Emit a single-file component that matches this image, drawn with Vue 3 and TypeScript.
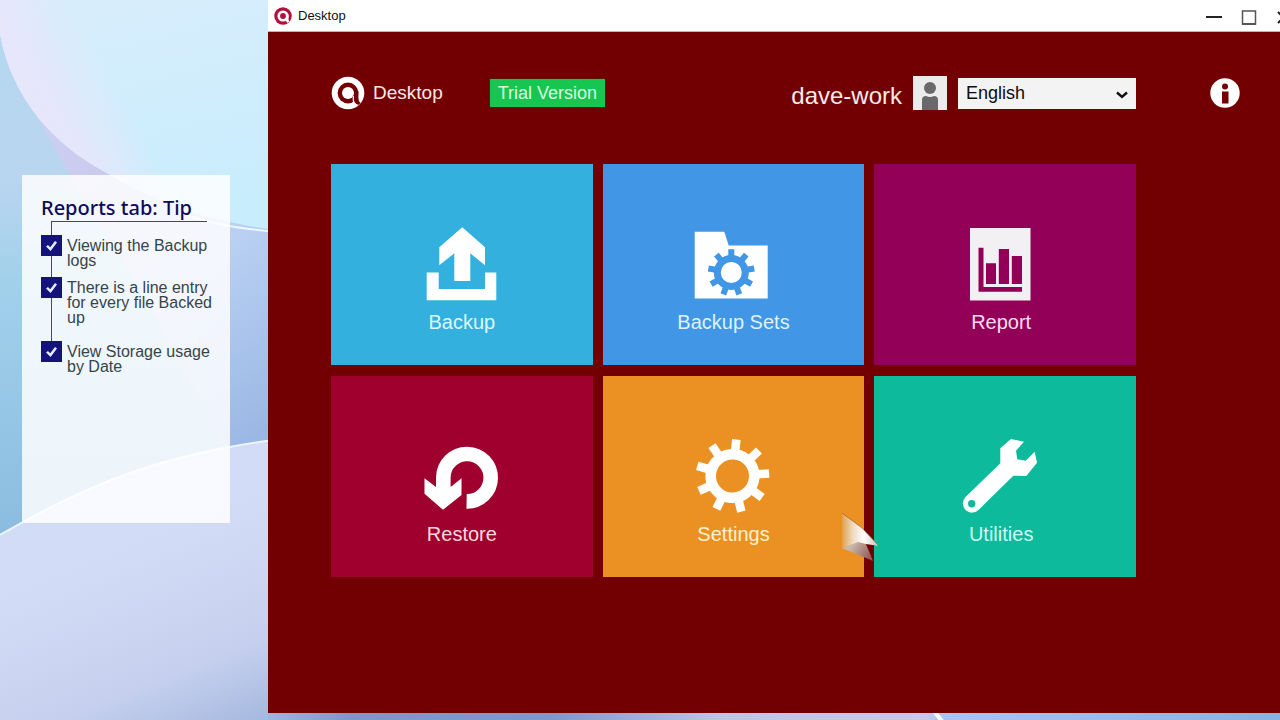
<script setup lang="ts">
import { ref } from 'vue'

interface Tip {
  id: string
  text: string
  done: boolean
}

interface Tile {
  id: string
  label: string
}

const tips = ref<Tip[]>([
  { id: 'tip-logs', text: 'Viewing the Backup logs', done: true },
  { id: 'tip-lines', text: 'There is a line entry for every file Backed up', done: true },
  { id: 'tip-storage', text: 'View Storage usage by Date', done: true },
])

const tiles: Tile[] = [
  { id: 'backup', label: 'Backup' },
  { id: 'sets', label: 'Backup Sets' },
  { id: 'report', label: 'Report' },
  { id: 'restore', label: 'Restore' },
  { id: 'settings', label: 'Settings' },
  { id: 'utilities', label: 'Utilities' },
]

const teeth = [0, 1, 2, 3, 4, 5, 6, 7, 8].map((n) => n * 40)
const language = ref('English')
</script>

<template>
  <div class="screen">
    <svg class="wallpaper" viewBox="0 0 1280 720" preserveAspectRatio="xMinYMin slice" aria-hidden="true">
      <defs>
        <linearGradient id="base" x1="0" y1="0" x2="0" y2="1">
          <stop offset="0" stop-color="#b4d8f0" />
          <stop offset="0.25" stop-color="#b9d5f0" />
          <stop offset="0.4" stop-color="#a0d0ea" />
          <stop offset="0.75" stop-color="#8bbce0" />
        </linearGradient>
        <linearGradient id="sky" x1="0" y1="0" x2="0.3" y2="1">
          <stop offset="0" stop-color="#d9edfc" />
          <stop offset="1" stop-color="#c8edfd" />
        </linearGradient>
        <linearGradient id="edge" x1="10" y1="100" x2="95" y2="50" gradientUnits="userSpaceOnUse">
          <stop offset="0" stop-color="#e8e6fb" />
          <stop offset="0.35" stop-color="#e8e6fb" stop-opacity="0.9" />
          <stop offset="1" stop-color="#e8e6fb" stop-opacity="0" />
        </linearGradient>
        <linearGradient id="ribbon" x1="20" y1="90" x2="290" y2="450" gradientUnits="userSpaceOnUse">
          <stop offset="0" stop-color="#cfd3f3" />
          <stop offset="0.3" stop-color="#c9c9ee" />
          <stop offset="0.55" stop-color="#b9d0f2" />
          <stop offset="1" stop-color="#95b3e2" />
        </linearGradient>
        <linearGradient id="hill" x1="60" y1="440" x2="190" y2="760" gradientUnits="userSpaceOnUse">
          <stop offset="0" stop-color="#d0dcf6" />
          <stop offset="0.4" stop-color="#d2dbf5" />
          <stop offset="0.75" stop-color="#c6d0ee" />
          <stop offset="1" stop-color="#a2b6de" />
        </linearGradient>
        <linearGradient id="strip" x1="268" y1="0" x2="1280" y2="0" gradientUnits="userSpaceOnUse">
          <stop offset="0" stop-color="#9bb8de" />
          <stop offset="0.08" stop-color="#7d98c6" />
          <stop offset="0.28" stop-color="#8495c9" />
          <stop offset="0.45" stop-color="#c2c4e4" />
          <stop offset="0.65" stop-color="#ccc6ea" />
          <stop offset="0.67" stop-color="#a3c6f2" />
          <stop offset="1" stop-color="#82b6dc" />
        </linearGradient>
      </defs>
      <rect width="1280" height="720" fill="url(#base)" />
      <path d="M20 90C50 135 70 180 110 240C160 320 200 400 230 450L300 440V200L110 100Z" fill="url(#ribbon)" />
      <path d="M0 0V34C12 100 55 145 105 172C150 198 200 223 300 233V0Z" fill="url(#sky)" />
      <path d="M0 0V34C12 100 55 145 105 172C150 198 200 223 300 233V0Z" fill="url(#edge)" />
      <path d="M180 212C205 223 235 229 300 234" fill="none" stroke="#e9f7ff" stroke-width="2" />
      <path d="M0 535C70 495 150 452 300 437V720H0Z" fill="url(#hill)" />
      <path d="M0 535C70 495 150 452 300 437" fill="none" stroke="#eaf5ff" stroke-width="2" />
      <rect x="268" y="712" width="1012" height="8" fill="url(#strip)" />
      <path d="M933 710L942 721" stroke="#ffffff" stroke-width="4" />
    </svg>

    <aside class="side">
      <section class="card">
        <h2>Reports tab: Tip</h2>
        <ul>
          <li v-for="tip in tips" :key="tip.id">
            <input :id="tip.id" v-model="tip.done" type="checkbox" />
            <label :for="tip.id">{{ tip.text }}</label>
          </li>
        </ul>
      </section>
    </aside>

    <main class="window">
      <div class="titlebar">
        <svg class="app-mark" viewBox="0 0 34 34" aria-hidden="true">
          <circle cx="17" cy="17" r="16.500" fill="#b0103c" />
          <circle cx="17" cy="17" r="10.500" fill="#fff" />
          <path d="M22 14H27.500V23Q27.500 26 29.500 27.500L26 30Q22 28 22 24Z" fill="#fff" />
          <circle cx="17" cy="17" r="5.500" fill="#b0103c" />
        </svg>
        <span class="app-title">Desktop</span>
        <button type="button" class="win-btn" aria-label="Minimize">
          <svg viewBox="0 0 18 18"><path d="M1 10H17" stroke="#222" stroke-width="2" /></svg>
        </button>
        <button type="button" class="win-btn" aria-label="Maximize">
          <svg viewBox="0 0 18 18"><path d="M2.500 4H15.500V17H2.500Z" fill="none" stroke="#555" stroke-width="1.500" /><path d="M2 17H16" stroke="#555" stroke-width="2" /></svg>
        </button>
        <button type="button" class="win-btn" aria-label="Close">
          <svg viewBox="0 0 18 18"><path d="M3 5L14 16M14 5L3 16" stroke="#222" stroke-width="2" /></svg>
        </button>
      </div>

      <div class="content">
        <header class="top">
          <svg class="brand-mark" viewBox="0 0 34 34" aria-hidden="true">
            <circle cx="17" cy="17" r="16.300" fill="#fff" />
            <circle cx="17" cy="17" r="10.400" fill="#720003" />
            <path d="M22.800 15H27.400V22Q27.400 25.500 29.500 27L27.500 29Q22.800 27.500 22.800 23Z" fill="#720003" />
            <path d="M22.300 20V24.500Q22.600 28.500 26.500 29.500" fill="none" stroke="#fff" stroke-width="1.200" />
            <circle cx="17" cy="17" r="6" fill="#fff" />
          </svg>
          <span class="brand">Desktop</span>
          <span class="trial">Trial Version</span>
          <span class="user">dave-work</span>
          <svg class="avatar" viewBox="0 0 34 34" aria-hidden="true">
            <rect width="34" height="34" fill="#ececec" />
            <circle cx="17" cy="12" r="6" fill="#696969" />
            <path d="M9 34V24Q9 20 13 20Q17 22 21 20Q25 20 25 24V34Z" fill="#696969" />
          </svg>
          <div class="lang">
            <select v-model="language" aria-label="Language">
              <option>English</option>
            </select>
            <svg viewBox="0 0 12 8" aria-hidden="true"><path d="M1 1.500L6 6L11 1.500" fill="none" stroke="#111" stroke-width="2.400" /></svg>
          </div>
        </header>
        <button type="button" class="info" aria-label="Information">
          <svg viewBox="0 0 30 30">
            <circle cx="15" cy="15" r="14.700" fill="#fff" />
            <circle cx="15" cy="8.500" r="3" fill="#720003" />
            <rect x="12" y="13.500" width="6.500" height="12" fill="#720003" />
          </svg>
        </button>

        <nav class="tiles">
          <button v-for="tile in tiles" :key="tile.id" type="button" class="tile" :class="tile.id">
            <svg class="icon" viewBox="0 0 80 80" aria-hidden="true">
              <g v-if="tile.id === 'backup'" fill="#fff">
                <path d="M40.300 5.300L63 25.300V43.300L48.300 31.300V59H32.300V31.300L17.300 43.300V25.300Z" />
                <path d="M4.700 50.500H16.700V67H63V50.500H74.300V78.300H4.700Z" />
              </g>
              <g v-else-if="tile.id === 'sets'">
                <path d="M1.700 9.800H31.300L35.700 23.500H74.700V76.500H1.700Z" fill="#fff" />
                <g transform="translate(38.300 50.500)" fill="#4196e6">
                  <rect v-for="a in teeth" :key="a" x="-3" y="-23.300" width="6" height="9" :transform="`rotate(${a})`" />
                  <circle r="14" fill="none" stroke="#4196e6" stroke-width="7" />
                </g>
              </g>
              <g v-else-if="tile.id === 'report'">
                <rect x="9" y="6" width="60.500" height="72.500" fill="#f3f0f3" />
                <path d="M17.500 25.700H22.500V65H61V69.700H17.500Z M25 41.300H35V62H25Z M37.800 27H48V62H37.800Z M50.800 34H61V62H50.800Z" fill="#930058" />
              </g>
              <g v-else-if="tile.id === 'restore'">
                <path d="M44.600 67.400A23.700 23.700 0 1 0 21.300 43.500V58" fill="none" stroke="#fff" stroke-width="14.600" />
                <path d="M2.500 44.300L14 53H28.600L39.500 44.300V61L21 75.700L2.500 59.700Z" fill="#fff" />
              </g>
              <g v-else-if="tile.id === 'settings'" transform="translate(39.500 42) rotate(6)" fill="#fff">
                <rect v-for="a in teeth" :key="a" x="-4.300" y="-36.700" width="8.600" height="14" :transform="`rotate(${a})`" />
                <circle r="21.800" fill="none" stroke="#fff" stroke-width="10.600" />
              </g>
              <path
                v-else
                fill="#fff"
                fill-rule="evenodd"
                d="M50 5L63 7.700L55 16.700L56.300 25.300L64.700 26.700L73.700 17.700L76 28.700L65.300 42L52.300 41.700L17.700 75.700A9 9 0 0 1 4.300 63.300L39.300 29.300V14.300Z M10.700 66A3.700 3.700 0 1 0 10.700 73.400A3.700 3.700 0 1 0 10.700 66Z"
              />
            </svg>
            <span>{{ tile.label }}</span>
          </button>
        </nav>
      </div>
    </main>

    <svg class="pointer" viewBox="0 0 42 52" aria-hidden="true">
      <defs>
        <linearGradient id="blade" x1="0" y1="0" x2="1" y2="0">
          <stop offset="0" stop-color="#e0a04c" />
          <stop offset="0.3" stop-color="#efdcc4" />
          <stop offset="0.6" stop-color="#ffffff" />
          <stop offset="1" stop-color="#c9b8b4" />
        </linearGradient>
        <linearGradient id="shade" x1="0" y1="0" x2="1" y2="1">
          <stop offset="0" stop-color="#dfb57e" />
          <stop offset="0.5" stop-color="#c8b8ac" />
          <stop offset="1" stop-color="#8c4a48" />
        </linearGradient>
      </defs>
      <path d="M2 2L2 37L33 50L26 33Z" fill="url(#shade)" />
      <path d="M2 2L22 17L39 35L26 33L18 31L2 37Z" fill="url(#blade)" />
      <path d="M2 2L22 17L39 35" fill="none" stroke="#8a5a3c" stroke-opacity="0.6" />
    </svg>
  </div>
</template>

<style>
body {
  margin: 0;
}
</style>

<style scoped>
.screen {
  position: relative;
  display: flex;
  min-height: 100vh;
  overflow: hidden;
  box-sizing: border-box;
  padding-bottom: 7px;
  font-family: "Liberation Sans", Arial, sans-serif;
}
.wallpaper {
  position: absolute;
  inset: 0;
  width: 100%;
  height: 100%;
}
button {
  border: 0;
  padding: 0;
  background: none;
  font: inherit;
  color: inherit;
}
svg {
  display: block;
}
.side {
  position: relative;
  flex: 0 0 268px;
  box-sizing: border-box;
  padding: 175px 38px 0 22px;
}
.card {
  box-sizing: border-box;
  min-height: 348px;
  padding: 20px 12px 20px 19px;
  background: rgba(255, 255, 255, 0.84);
}
h2 {
  margin: 0;
  font: 500 20px/26px "Noto Sans", "Open Sans", sans-serif;
  color: #0d0a5c;
  white-space: nowrap;
}
ul {
  position: relative;
  margin: 0 11px 0 10px;
  padding: 13px 0 0;
  border-top: 1px solid #4a4a55;
  list-style: none;
}
ul::before {
  content: "";
  position: absolute;
  top: 0;
  bottom: 30px;
  left: 0;
  width: 1px;
  background: #4a4a55;
}
li {
  position: relative;
  display: flex;
  gap: 5px;
  margin: 0 -16px 9px -10px;
}
li:last-child {
  margin-top: 16px;
  margin-bottom: 0;
}
li input {
  appearance: none;
  flex: none;
  width: 21px;
  height: 21px;
  margin: 0;
  background: #15127c;
}
li input:checked::after {
  content: "";
  display: block;
  width: 11px;
  height: 10px;
  margin: 6px 5px;
  background: #e4edfb;
  clip-path: polygon(0 56%, 18% 40%, 38% 62%, 82% 0, 100% 14%, 42% 100%);
}
li label {
  padding-top: 3px;
  font-size: 16px;
  line-height: 15px;
  color: #37444a;
}
.window {
  position: relative;
  flex: 1;
  display: flex;
  flex-direction: column;
  margin-right: -18px;
  background: #720003;
}
.titlebar {
  display: flex;
  align-items: center;
  height: 32px;
  box-sizing: border-box;
  padding: 0 5px 0 6px;
  background: #fff;
  border-bottom: 1px solid #d8a8a8;
}
.app-mark {
  width: 18px;
  height: 18px;
}
.app-title {
  flex: 1;
  margin-left: 6px;
  font-size: 13px;
  color: #111;
}
.win-btn {
  width: 18px;
  height: 18px;
  margin-left: 17px;
}
.content {
  display: grid;
  grid-template-columns: 1fr 30px;
  column-gap: 74px;
  padding: 44px 58px 40px 63px;
  color: #fff;
}
.top {
  display: flex;
  align-items: center;
  height: 34px;
}
.brand-mark {
  width: 34px;
  height: 34px;
}
.brand {
  margin-left: 8px;
  font-size: 19px;
  color: #fbe9e6;
}
.trial {
  box-sizing: border-box;
  margin-left: 47px;
  padding: 0 8px;
  background: #16c650;
  box-shadow: 0 0 1px 1px #4f1a08;
  font-size: 18px;
  line-height: 28px;
  color: #dcfbe0;
}
.user {
  margin-left: auto;
  padding-top: 6px;
  font-size: 24px;
  line-height: 28px;
  color: #fbe9e6;
}
.avatar {
  width: 34px;
  height: 34px;
  margin: 0 11px;
}
.lang {
  position: relative;
  width: 178px;
}
.lang select {
  appearance: none;
  display: block;
  width: 100%;
  height: 31px;
  margin: 0;
  padding: 0 8px;
  border: 0;
  border-radius: 0;
  background: #f3f3f4;
  font: 18px "Liberation Sans", Arial, sans-serif;
  color: #0c0c0c;
}
.lang svg {
  position: absolute;
  top: 13px;
  right: 8px;
  width: 12px;
  height: 8px;
  pointer-events: none;
}
.info {
  width: 30px;
  height: 30px;
  align-self: center;
}
.tiles {
  display: grid;
  grid-template-columns: repeat(3, 1fr);
  gap: 11px 10px;
  margin-top: 54px;
}
.tile {
  display: flex;
  flex-direction: column;
  align-items: center;
  justify-content: flex-end;
  gap: 8px;
  height: 201px;
  padding-bottom: 31px;
  font-size: 20px;
  line-height: 24px;
}
.tile:nth-child(3n) {
  padding-right: 8px;
}
.icon {
  width: 80px;
  height: 80px;
}
.backup {
  background: #33b0dd;
  color: #dcf8ff;
}
.sets {
  background: #4196e6;
  color: #dff2ff;
}
.report {
  background: #930058;
  color: #fbdcf0;
}
.restore {
  background: #a0002d;
  color: #fbd9dd;
}
.settings {
  background: #eb9124;
  color: #fff1cc;
}
.utilities {
  background: #0eba9c;
  color: #cdfbee;
}
.pointer {
  position: absolute;
  top: 511px;
  left: 840px;
  width: 42px;
  height: 52px;
  pointer-events: none;
}
</style>
